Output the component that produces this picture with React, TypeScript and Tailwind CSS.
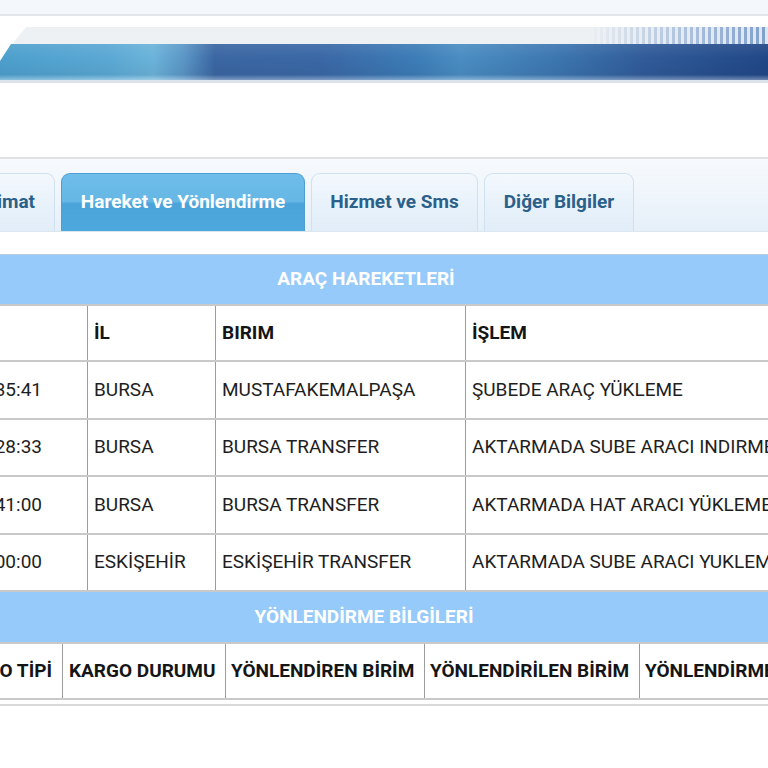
import React from "react";

const rows = [
  ["13.10.2023 10:35:41", "BURSA", "MUSTAFAKEMALPAŞA", "ŞUBEDE ARAÇ YÜKLEME"],
  ["13.10.2023 12:28:33", "BURSA", "BURSA TRANSFER", "AKTARMADA SUBE ARACI INDIRME"],
  ["13.10.2023 14:41:00", "BURSA", "BURSA TRANSFER", "AKTARMADA HAT ARACI YÜKLEME"],
  ["14.10.2023 03:00:00", "ESKİŞEHİR", "ESKİŞEHİR TRANSFER", "AKTARMADA SUBE ARACI YUKLEME"],
];

function Tab({ label, active, w }: { label: string; active?: boolean; w: string }) {
  if (active) {
    return (
      <div
        className={`${w} h-[58px] rounded-t-[9px] border border-b-0 border-[#4d9fd2] bg-[linear-gradient(to_bottom,#6fbde9_0%,#66b7e5_48%,#4aa4da_52%,#4da8dd_100%)] flex items-center justify-center text-white font-bold text-[19px] whitespace-nowrap shrink-0`}
      >
        {label}
      </div>
    );
  }
  return (
    <div
      className={`${w} h-[58px] rounded-t-[9px] border border-b-0 border-[#cfe0ee] bg-[linear-gradient(to_bottom,#f3f8fd_0%,#e9f2fb_50%,#e1edf8_100%)] flex items-center justify-center text-[#2a6089] font-bold text-[19px] whitespace-nowrap shrink-0`}
    >
      {label}
    </div>
  );
}

export default function App() {
  return (
    <div className="w-[768px] h-[768px] overflow-hidden bg-white font-['Roboto',sans-serif] flex flex-col">
      {/* top strip */}
      <div className="h-[14px] bg-[#f4f7fb] shrink-0" />
      <div className="h-[2px] bg-[#e2e5ea] shrink-0" />
      <div className="h-[11px] shrink-0" />
      {/* banner */}
      <div className="h-[17px] shrink-0 relative [clip-path:polygon(26px_0,100%_0,100%_100%,12px_100%)]">
        <div className="absolute inset-0 bg-[#eef1f4]" />
        <div className="absolute top-0 bottom-0 left-[588px] right-0 bg-[repeating-linear-gradient(90deg,#7f9fcc_0_3px,#dde6f2_3px_6px)]" />
        <div className="absolute top-0 bottom-0 left-[588px] right-0 bg-[linear-gradient(to_right,rgba(238,241,244,1)_0%,rgba(238,241,244,0.6)_35%,rgba(238,241,244,0)_100%)]" />
      </div>
      <div className="h-[36px] shrink-0 relative [clip-path:polygon(11px_0,100%_0,100%_100%,0_100%,0_17px)] bg-[linear-gradient(to_right,#4d9fcd_0%,#5aa8d4_14%,#6bb3da_20%,#5a95c6_24%,#3a66a2_28%,#3a68a6_42%,#3c7cb7_54%,#4a8dc2_60%,#3d77b1_72%,#305b99_84%,#28518f_92%,#214787_100%)]">
        <div className="absolute inset-0 bg-[linear-gradient(to_bottom,rgba(255,255,255,0.08)_0%,rgba(255,255,255,0)_40%,rgba(0,0,0,0.05)_85%,rgba(255,255,255,0.35)_100%)]" />
      </div>
      <div className="h-[3px] bg-[#dde3ea] shrink-0" />
      <div className="h-[74px] shrink-0" />
      <div className="h-[2px] bg-[#dfe1e4] shrink-0" />
      {/* tab bar */}
      <div className="h-[73px] shrink-0 bg-[linear-gradient(to_bottom,#f7fafd_0%,#e6f0f9_100%)] border-b border-[#dbe6ef] flex items-end">
        <div className="flex items-end gap-[6px] ml-[-100px]">
          <div className="w-[155px] h-[58px] rounded-t-[9px] border border-b-0 border-[#cfe0ee] bg-[linear-gradient(to_bottom,#f3f8fd_0%,#e9f2fb_50%,#e1edf8_100%)] flex items-center justify-end pr-[19px] text-[#2a6089] font-bold text-[19px] shrink-0">
            Teslimat
          </div>
          <Tab label="Hareket ve Yönlendirme" active w="w-[244px]" />
          <Tab label="Hizmet ve Sms" w="w-[167px]" />
          <Tab label="Diğer Bilgiler" w="w-[150px]" />
        </div>
      </div>
      <div className="h-[22px] shrink-0" />
      {/* ARAÇ HAREKETLERİ */}
      <div className="ml-[-150px] w-[1032px] shrink-0">
        <div className="h-[50px] bg-[#96cafa] border-t border-[#b9cde0] flex items-center justify-center text-white font-bold text-[19px]">
          ARAÇ HAREKETLERİ
        </div>
        <div className="flex h-[58px] border-y-2 border-[#c9c9c9] text-[19px] font-bold text-[#151515]">
          <div className="w-[238px] border-r border-[#9c9c9c] flex items-center pl-[6px]">TARİH</div>
          <div className="w-[128px] border-r border-[#9c9c9c] flex items-center pl-[6px]">İL</div>
          <div className="w-[250px] border-r border-[#9c9c9c] flex items-center pl-[6px]">BIRIM</div>
          <div className="flex-1 flex items-center pl-[6px]">İŞLEM</div>
        </div>
        {rows.map((r, i) => (
          <div key={i} className="flex h-[57.5px] border-b-2 border-[#c9c9c9] text-[19px] text-[#1e1e1e]">
            <div className="w-[238px] border-r border-[#9c9c9c] flex items-center justify-end pr-[45px] whitespace-nowrap">{r[0]}</div>
            <div className="w-[128px] border-r border-[#9c9c9c] flex items-center pl-[6px] whitespace-nowrap">{r[1]}</div>
            <div className="w-[250px] border-r border-[#9c9c9c] flex items-center pl-[6px] whitespace-nowrap">{r[2]}</div>
            <div className="flex-1 flex items-center pl-[6px] whitespace-nowrap">{r[3]}</div>
          </div>
        ))}
      </div>
      {/* YÖNLENDİRME BİLGİLERİ */}
      <div className="ml-[-154px] w-[1036px] shrink-0">
        <div className="h-[50px] bg-[#96cafa] flex items-center justify-center text-white font-bold text-[19px]">
          YÖNLENDİRME BİLGİLERİ
        </div>
      </div>
      <div className="ml-[-60px] w-[1000px] shrink-0">
        <div className="flex h-[58px] border-y-2 border-[#c9c9c9] text-[19px] font-bold text-[#151515] whitespace-nowrap">
          <div className="w-[123px] border-r border-[#9c9c9c] flex items-center justify-end pr-[10px]">KARGO TİPİ</div>
          <div className="w-[163px] border-r border-[#9c9c9c] flex items-center pl-[6px]">KARGO DURUMU</div>
          <div className="w-[199px] border-r border-[#9c9c9c] flex items-center pl-[5px]">YÖNLENDİREN BİRİM</div>
          <div className="w-[215px] border-r border-[#9c9c9c] flex items-center pl-[5px]">YÖNLENDİRİLEN BİRİM</div>
          <div className="flex-1 flex items-center pl-[5px]">YÖNLENDİRME TARİHİ</div>
        </div>
        <div className="h-[4px]" />
        <div className="h-[2px] bg-[#d9d9d9]" />
      </div>
    </div>
  );
}
